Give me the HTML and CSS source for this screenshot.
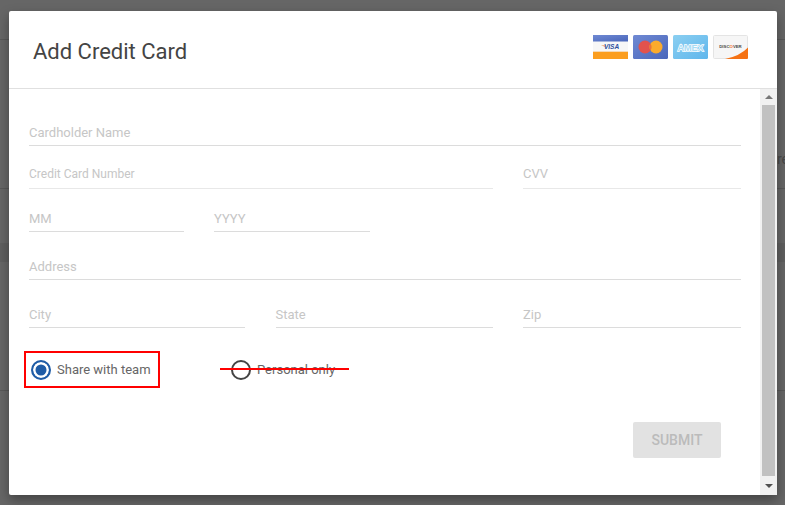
FILE: index.html
```html
<!DOCTYPE html>
<html lang="en">
<head>
    <meta charset="UTF-8">
    <meta name="viewport" content="width=device-width, initial-scale=1.0">
    <title>Add Credit Card</title>
    <link rel="stylesheet" href="styles.css">
</head>
<body>

    <div class="backdrop">
        <div class="back-line line-1"></div>
        <div class="back-line line-2"></div>
        <div class="back-row"></div>
        <div class="back-line line-3"></div>
        <span class="back-text">re</span>
    </div>

    <div class="modal">
        <div class="modal-header">
            <h1>Add Credit Card</h1>
            <div class="cards">
                <svg class="card" viewBox="0 0 35 24">
                    <defs>
                        <linearGradient id="blueTop" x1="0" y1="0" x2="1" y2="1">
                            <stop offset="0" stop-color="#6f89d3"/>
                            <stop offset="1" stop-color="#4a67bb"/>
                        </linearGradient>
                        <linearGradient id="skyCard" x1="0" y1="0" x2="1" y2="1">
                            <stop offset="0" stop-color="#8bcff1"/>
                            <stop offset="1" stop-color="#5fb6ec"/>
                        </linearGradient>
                    </defs>
                    <rect width="35" height="24" rx="1" fill="#f7f7f7"/>
                    <rect width="35" height="6.500" fill="url(#blueTop)"/>
                    <rect y="16" width="35" height="1" fill="#f5d9b5"/>
                    <rect y="17" width="35" height="7" fill="#fb9e1f"/>
                    <path d="M8 10 L13 10.500 L12 12 Z" fill="#f0a060"/>
                    <text x="18.500" y="14" class="card-text visa-text">VISA</text>
                </svg>
                <svg class="card" viewBox="0 0 35 24">
                    <rect width="35" height="24" rx="1.500" fill="url(#blueTop)"/>
                    <circle cx="12" cy="12" r="6.500" fill="#e2524d"/>
                    <circle cx="23" cy="12" r="6.500" fill="#fbab2d"/>
                    <path d="M17.500 8.500 A6.500 6.500 0 0 1 17.500 15.500 A6.500 6.500 0 0 1 17.500 8.500 Z" fill="#e8743a"/>
                </svg>
                <svg class="card" viewBox="0 0 35 24">
                    <rect width="35" height="24" rx="1.500" fill="url(#skyCard)"/>
                    <text x="17.500" y="15.500" class="card-text amex-text">AMEX</text>
                </svg>
                <svg class="card" viewBox="0 0 35 24">
                    <rect x="0.500" y="0.500" width="34" height="23" rx="1" fill="#f6f6f6" stroke="#e4e4e4"/>
                    <path d="M12 24 Q27 21 35 12.500 L35 23 Q35 24 34 24 Z" fill="#f57214"/>
                    <text x="17.500" y="13" class="card-text disc-text">DISC<tspan class="disc-o">O</tspan>VER</text>
                </svg>
            </div>
        </div>

        <div class="modal-body">
            <form class="form">
                <div class="row row-name">
                    <div class="field"><span>Cardholder Name</span></div>
                </div>
                <div class="row row-number">
                    <div class="field field-number"><span>Credit Card Number</span></div>
                    <div class="field field-cvv"><span>CVV</span></div>
                </div>
                <div class="row row-date">
                    <div class="field field-month"><span>MM</span></div>
                    <div class="field field-year"><span>YYYY</span></div>
                </div>
                <div class="row row-address">
                    <div class="field"><span>Address</span></div>
                </div>
                <div class="row-city">
                    <div class="field"><span>City</span></div>
                    <div class="field"><span>State</span></div>
                    <div class="field"><span>Zip</span></div>
                </div>
                <div class="radios">
                    <div class="radio-option radio-marked">
                        <span class="radio radio-on"></span>
                        <span>Share with team</span>
                    </div>
                    <div class="radio-option radio-struck">
                        <span class="radio"></span>
                        <span>Personal only</span>
                        <i class="strike"></i>
                    </div>
                </div>
                <div class="actions">
                    <button type="button" class="submit" disabled>SUBMIT</button>
                </div>
            </form>

            <div class="scrollbar">
                <div class="arrow arrow-up"></div>
                <div class="thumb"></div>
                <div class="arrow arrow-down"></div>
            </div>
        </div>
    </div>

</body>
</html>
```

FILE: styles.css
```css
* {
    box-sizing: border-box;
}

html, body {
    height: 100%;
}

body {
    margin: 0;
    font-family: Roboto, Arial, sans-serif;
    background-color: #666;
    overflow: hidden;
    padding: 11px 8px 10px 9px;
}

/* page behind the dialog, only the edges of it show */
.backdrop {
    position: absolute;
    top: 0;
    left: 0;
    right: 0;
    bottom: 0;
}

.back-line {
    position: absolute;
    left: 0;
    right: 0;
    height: 1px;
    background-color: #585858;
}

.line-1 {
    top: 39px;
}

.line-2 {
    top: 188px;
}

.line-3 {
    top: 390px;
}

.back-row {
    position: absolute;
    top: 243px;
    left: 0;
    right: 0;
    height: 19px;
    background-color: #5f5f5f;
}

.back-text {
    position: absolute;
    top: 151px;
    left: 777px;
    font-size: 14px;
    color: #484848;
}

.modal {
    position: relative;
    height: 484px;
    background-color: #fff;
    border-radius: 2px;
    box-shadow: 0 5px 12px rgba(0, 0, 0, 0.35);
    display: flex;
    flex-direction: column;
}

.modal-header {
    height: 78px;
    flex: none;
    border-bottom: 1px solid #e0e0e0;
    display: flex;
    justify-content: space-between;
    padding: 24px 29px 0 24px;
}

h1 {
    margin: 3px 0 0;
    font-size: 22px;
    font-weight: 400;
    line-height: 28px;
    color: #444;
}

.cards {
    display: flex;
    gap: 5px;
}

.card {
    width: 35px;
    height: 24px;
}

.card-text {
    text-anchor: middle;
    font-family: "Liberation Sans", Arial, sans-serif;
    font-weight: 700;
}

.visa-text {
    font-size: 6.500px;
    font-style: italic;
    fill: #2c4f9e;
}

.amex-text {
    font-size: 9px;
    fill: #a8dcf5;
    stroke: #fff;
    stroke-width: 1.300px;
    paint-order: stroke;
}

.disc-text {
    font-size: 4.300px;
    fill: #4a4a4a;
}

.disc-o {
    fill: #f57214;
}

.modal-body {
    flex: 1;
    display: flex;
    min-height: 0;
}

.form {
    flex: 1;
    padding: 0 19px 0 20px;
}

.row {
    display: flex;
}

.row-name {
    padding-top: 29px;
}

.row-number {
    padding-top: 15px;
    gap: 30px;
}

.row-date {
    padding-top: 15px;
    gap: 30px;
}

.row-address {
    padding-top: 20px;
}

.row-city {
    display: grid;
    grid-template-columns: 216px 217px 218px;
    justify-content: space-between;
    padding-top: 20px;
}

.field {
    flex: 1;
    height: 28px;
    border-bottom: 1px solid #dcdcdc;
    font-size: 13px;
    line-height: 30px;
    color: #c6c6c6;
}

.field-number {
    flex: none;
    width: 464px;
    font-size: 12px;
    line-height: 26px;
    border-bottom-color: #e8e8e8;
}

.field-cvv {
    line-height: 26px;
    border-bottom-color: #e8e8e8;
}

.field-month {
    flex: none;
    width: 155px;
}

.field-year {
    flex: none;
    width: 156px;
}

.radios {
    display: flex;
    align-items: center;
    margin: 23px 0 0 -5px;
}

.radio-option {
    position: relative;
    display: flex;
    align-items: center;
    gap: 6px;
    font-size: 13px;
    color: #666;
    height: 37px;
}

.radio-marked {
    width: 136px;
    padding-left: 5px;
    border: 2px solid #f00;
}

.radio-struck {
    margin-left: 71px;
}

.radio {
    width: 20px;
    height: 20px;
    border-radius: 50%;
    border: 2px solid #444;
}

.radio-on {
    border-color: #1f5ca6;
    background-color: #1f5ca6;
    box-shadow: inset 0 0 0 2.500px #fff;
}

.strike {
    position: absolute;
    top: 17px;
    left: -11px;
    width: 129px;
    height: 2px;
    background-color: #f00;
}

.actions {
    display: flex;
    justify-content: flex-end;
    margin-top: 34px;
    padding-right: 20px;
}

.submit {
    width: 88px;
    height: 36px;
    border: none;
    border-radius: 2px;
    background-color: #e2e2e2;
    color: #bbb;
    font-family: Roboto, Arial, sans-serif;
    font-size: 14px;
    font-weight: 500;
}

.scrollbar {
    width: 17px;
    flex: none;
    background-color: #f1f1f1;
    display: flex;
    flex-direction: column;
    align-items: center;
}

.arrow {
    flex: none;
    display: flex;
    align-items: center;
    justify-content: center;
}

.arrow-up {
    height: 16px;
}

.arrow-down {
    height: 19px;
}

.arrow::before {
    content: "";
    border-left: 4px solid transparent;
    border-right: 4px solid transparent;
}

.arrow-up::before {
    border-bottom: 4px solid #777;
}

.arrow-down::before {
    border-top: 4px solid #505050;
}

.thumb {
    flex: 1;
    width: 13px;
    background-color: #c1c1c1;
}
```
